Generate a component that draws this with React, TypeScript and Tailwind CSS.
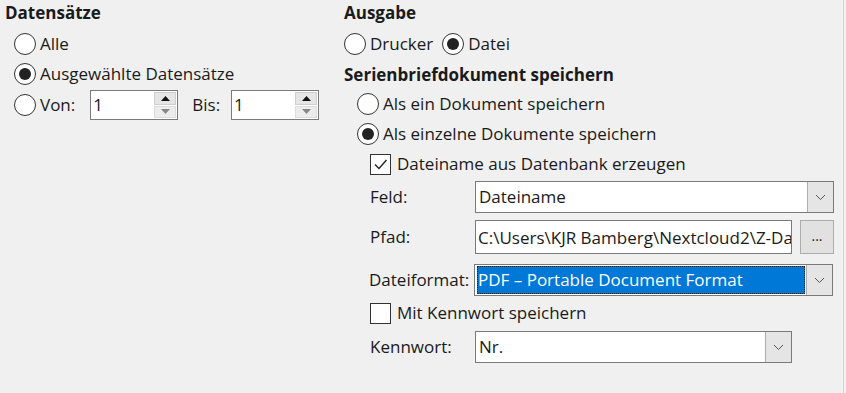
import React from 'react';

const font = { fontFamily: '"Open Sans", "Noto Sans", Arial, sans-serif' };

const Radio = ({ checked, label }: { checked?: boolean; label: string }) => (
  <div className="flex items-center h-[26px]">
    <span className="w-[22px] h-[22px] rounded-full border border-[#333] bg-white flex items-center justify-center shrink-0">
      {checked && <span className="w-[12px] h-[12px] rounded-full bg-[#222]" />}
    </span>
    <span className="ml-[4px] text-[17px] text-[#1a1a1a]">{label}</span>
  </div>
);

const Checkbox = ({ checked, label }: { checked?: boolean; label: string }) => (
  <div className="flex items-center h-[26px]">
    <span className="w-[21px] h-[21px] border border-[#333] bg-white flex items-center justify-center shrink-0">
      {checked && (
        <svg width="15" height="15" viewBox="0 0 15 15">
          <path d="M2 7.5 L6 11.5 L13.5 3" fill="none" stroke="#222" strokeWidth="1.4" />
        </svg>
      )}
    </span>
    <span className="ml-[6px] text-[17px] text-[#1a1a1a]">{label}</span>
  </div>
);

const Chevron = () => (
  <svg width="11" height="7" viewBox="0 0 11 7">
    <path d="M1 1 L5.5 5.5 L10 1" fill="none" stroke="#555" strokeWidth="1" />
  </svg>
);

const Combo = ({ value, width, selected }: { value: string; width: string; selected?: boolean }) => (
  <div className={`flex h-[32px] border border-[#7a7a7a] bg-white ${width}`}>
    <div className="flex-1 flex items-center pl-[2px] pr-[1px] py-[1px] min-w-0">
      <div
        className={`flex-1 h-full flex items-center pl-[1px] text-[17px] whitespace-nowrap overflow-hidden ${
          selected ? 'bg-[#0078d7] text-white outline-1 outline-dotted outline-[#222] -outline-offset-1' : 'text-[#1a1a1a]'
        }`}
      >
        {value}
      </div>
    </div>
    <div className="w-[26px] bg-[#e5e5e5] border-l border-[#adadad] flex items-center justify-center">
      <Chevron />
    </div>
  </div>
);

const Spin = () => (
  <div className="flex w-[88px] h-[30px] border border-[#7a7a7a] bg-white">
    <div className="flex-1 flex items-center pl-[2px] text-[17px] text-[#1a1a1a]">1</div>
    <div className="w-[24px] flex flex-col p-[1px] gap-[1px]">
      <div className="flex-1 bg-[#e5e5e5] border border-[#cfcfcf] flex items-center justify-center">
        <svg width="9" height="5" viewBox="0 0 9 5"><path d="M0 5 L4.5 0 L9 5 Z" fill="#111" /></svg>
      </div>
      <div className="flex-1 bg-[#ececec] border border-[#dcdcdc] flex items-center justify-center">
        <svg width="9" height="5" viewBox="0 0 9 5"><path d="M0 0 L4.5 5 L9 0 Z" fill="#888" /></svg>
      </div>
    </div>
  </div>
);

const App = () => {
  return (
    <div className="w-[846px] h-[393px] bg-[#f0f0f0] flex overflow-hidden" style={font}>
      {/* Datensätze */}
      <div className="w-[344px] pl-[5px]">
        <div className="h-[26px] flex items-center text-[17px] font-bold text-[#1a1a1a]">Datensätze</div>
        <div className="pl-[9px]">
          <div className="mt-[5px]"><Radio label="Alle" /></div>
          <div className="mt-[4px]"><Radio checked label="Ausgewählte Datensätze" /></div>
          <div className="mt-[3px] flex items-center h-[30px]">
            <Radio label="Von:" />
            <div className="ml-[15px]"><Spin /></div>
            <span className="ml-[14px] text-[17px] text-[#1a1a1a]">Bis:</span>
            <div className="ml-[11px]"><Spin /></div>
          </div>
        </div>
      </div>

      {/* Ausgabe */}
      <div className="flex-1">
        <div className="h-[26px] flex items-center text-[17px] font-bold text-[#1a1a1a]">Ausgabe</div>
        <div className="mt-[5px] flex items-center gap-[9px]">
          <Radio label="Drucker" />
          <Radio checked label="Datei" />
        </div>
        <div className="mt-[5px] h-[26px] flex items-center text-[17px] font-bold text-[#1a1a1a]">
          Serienbriefdokument speichern
        </div>
        <div className="pl-[13px]">
          <div className="mt-[3px]"><Radio label="Als ein Dokument speichern" /></div>
          <div className="mt-[4px]"><Radio checked label="Als einzelne Dokumente speichern" /></div>
          <div className="pl-[13px]">
            <div className="mt-[4px]"><Checkbox checked label="Dateiname aus Datenbank erzeugen" /></div>
            <div className="mt-[4px] flex items-center">
              <span className="w-[105px] text-[17px] text-[#1a1a1a]">Feld:</span>
              <Combo value="Dateiname" width="w-[359px]" />
            </div>
            <div className="mt-[7px] flex items-center h-[34px]">
              <span className="w-[105px] text-[17px] text-[#1a1a1a]">Pfad:</span>
              <input
                readOnly
                value="C:\Users\KJR Bamberg\Nextcloud2\Z-Daten"
                className="w-[317px] h-[34px] border border-[#7a7a7a] bg-white pl-[2px] text-[17px] text-[#1a1a1a] outline-none"
              />
              <div className="ml-[8px] w-[34px] h-[34px] bg-[#e1e1e1] border border-[#adadad] flex items-center justify-center text-[14px] text-[#1a1a1a] pb-[4px]">
                ...
              </div>
            </div>
            <div className="mt-[10px] flex items-center">
              <span className="w-[105px] text-[17px] text-[#1a1a1a] -ml-[1px] whitespace-nowrap">Dateiformat:</span>
              <Combo selected value="PDF – Portable Document Format" width="w-[359px]" />
            </div>
            <div className="mt-[4px]"><Checkbox label="Mit Kennwort speichern" /></div>
            <div className="mt-[5px] flex items-center">
              <span className="w-[105px] text-[17px] text-[#1a1a1a]">Kennwort:</span>
              <Combo value="Nr." width="w-[317px]" />
            </div>
          </div>
        </div>
      </div>

      {/* right edge */}
      <div className="w-[3px] ml-auto border-l border-[#d4d4d4] bg-[#f0f0f0]" />
    </div>
  );
};

export default App;
